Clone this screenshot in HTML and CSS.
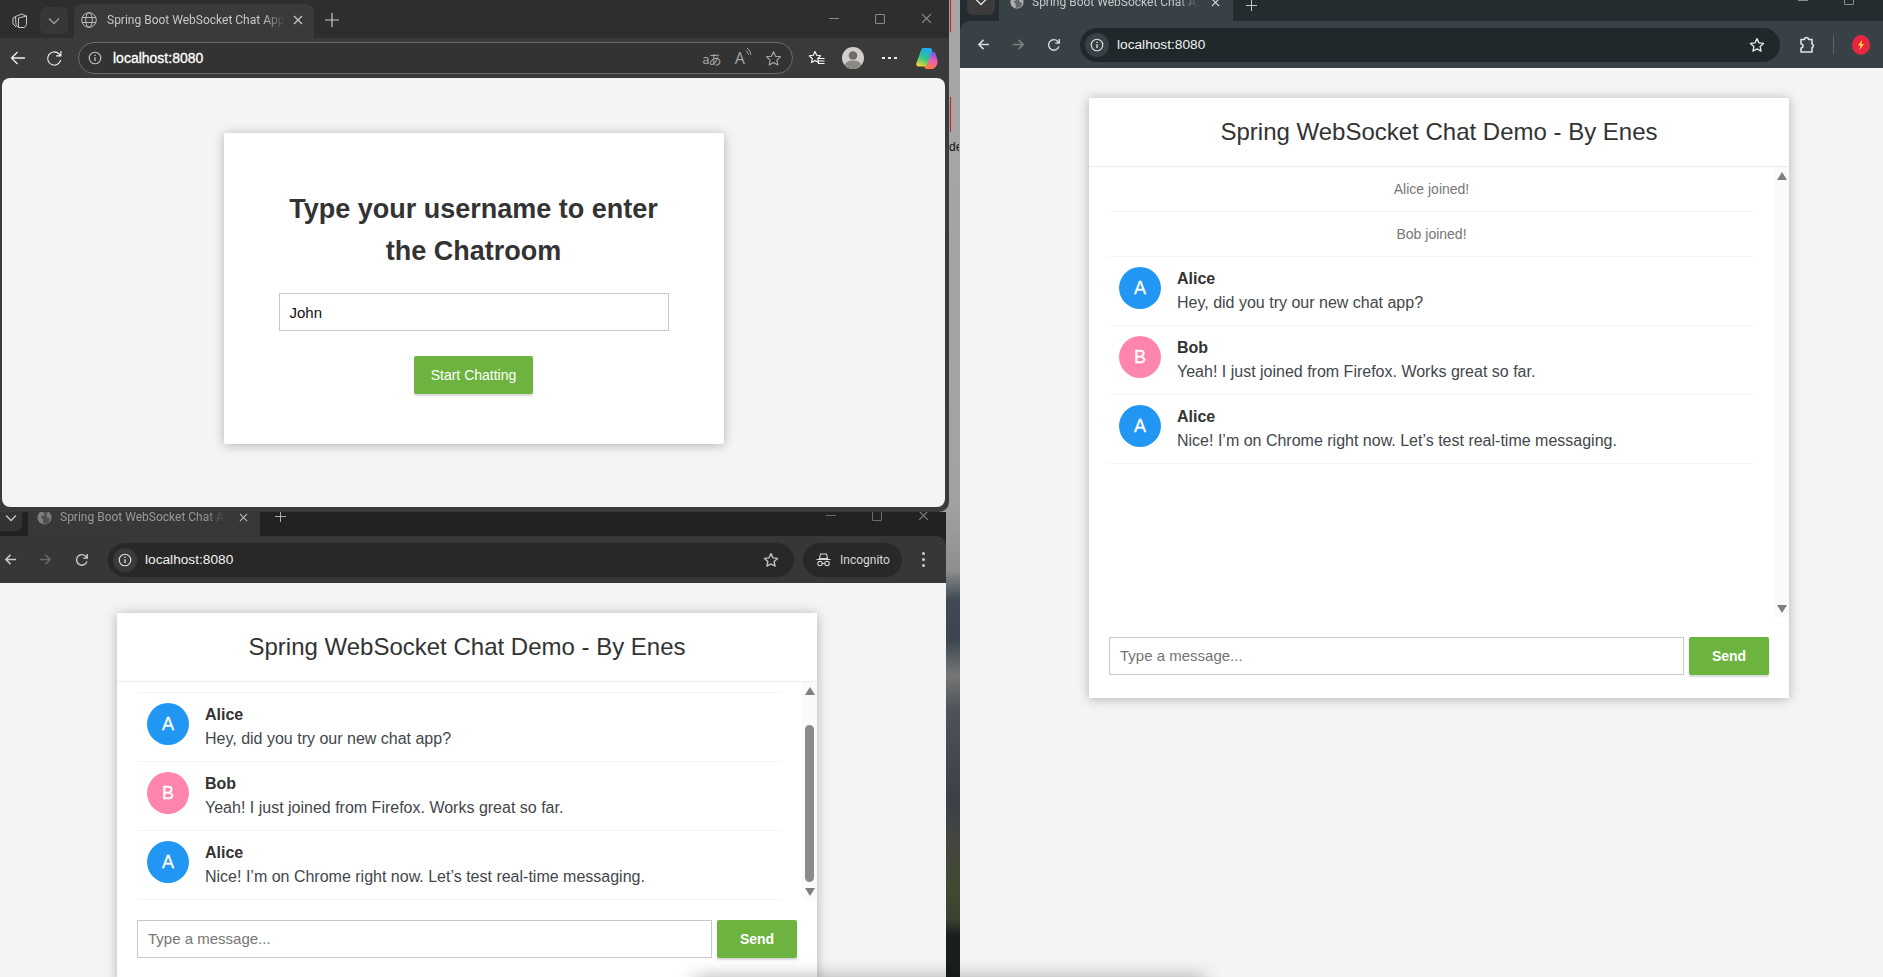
FILE: index.html
```html
<!doctype html>
<html lang="en">
<head>
  <title>Spring Boot WebSocket Chat App</title>
  <meta charset="utf-8">
  <link rel="stylesheet" href="styles.css">
</head>
<body>

  <!-- shared icons -->
  <svg class="defs" width="0" height="0">
    <symbol id="i-back" viewBox="0 0 16 16"><path d="M15 8H1.5M7.5 2L1.5 8l6 6" fill="none" stroke="currentColor" stroke-width="1.3"/></symbol>
    <symbol id="i-back-bold" viewBox="0 0 14 14"><path d="M13 7H2M7 2L2 7l5 5" fill="none" stroke="currentColor" stroke-width="1.7"/></symbol>
    <symbol id="i-forward" viewBox="0 0 14 14"><path d="M1 7h11M7 2l5 5-5 5" fill="none" stroke="currentColor" stroke-width="1.7"/></symbol>
    <symbol id="i-reload" viewBox="0 0 16 16"><path d="M13.6 9.5A6 6 0 1 1 12 3.6L14 5.6M14 1v4.8H9.4" fill="none" stroke="currentColor" stroke-width="1.6"/></symbol>
    <symbol id="i-info" viewBox="0 0 16 16"><circle cx="8" cy="8" r="6.6" fill="none" stroke="currentColor" stroke-width="1.3"/><path d="M8 7v4.4M8 4.4v1.4" stroke="currentColor" stroke-width="1.5"/></symbol>
    <symbol id="i-star" viewBox="0 0 18 18"><path d="M9 1.8l2.2 4.8 5.2.6-3.9 3.5 1.1 5.2L9 13.3l-4.6 2.6 1.1-5.2L1.6 7.2l5.2-.6z" fill="none" stroke="currentColor" stroke-width="1.5" stroke-linejoin="round"/></symbol>
    <symbol id="i-globe-solid" viewBox="0 0 16 16"><circle cx="8" cy="8" r="7.5" fill="currentColor"/><path d="M5 1.5l3 2.5-1 2-3 1 2 2.5 1 4.5-2 1 7-1 2-5-3-1-1-3 2-2-4-1z" fill="#2a2a2a" opacity=".55"/></symbol>
    <symbol id="i-close" viewBox="0 0 10 10"><path d="M1 1l8 8M9 1L1 9" fill="none" stroke="currentColor" stroke-width="1.2"/></symbol>
    <symbol id="i-plus" viewBox="0 0 14 14"><path d="M7 0v14M0 7h14" fill="none" stroke="currentColor" stroke-width="1.2"/></symbol>
    <symbol id="i-chevron" viewBox="0 0 12 8"><path d="M1 1.5l5 5 5-5" fill="none" stroke="currentColor" stroke-width="1.3"/></symbol>
  </svg>

  <div class="desktop">
    <div class="red-edge top"></div>
    <div class="red-edge middle"></div>
    <div class="peek-text">de</div>

    <!-- edge window, login page -->
    <div class="window edge-window">
      <div class="tabstrip">
        <svg class="tab-actions" width="16" height="16" viewBox="0 0 16 16" fill="none" stroke="#c8c8c8" stroke-width="1"><path d="M3.5 3.5l6-2.5 5 2v8.5l-2 3H6.5L4 12z"/><path d="M1 5l2.5-1.5M1 5v6l3 3M6.5 5l8-2M6.5 5v9.500"/></svg>
        <div class="tab-list-btn"><svg width="12" height="8"><use href="#i-chevron"/></svg></div>
        <div class="tab">
          <svg class="tab-globe" width="16" height="16" viewBox="0 0 16 16" fill="none" stroke="#b9b9b9" stroke-width="1"><circle cx="8" cy="8" r="7.300"/><ellipse cx="8" cy="8" rx="3.300" ry="7.300"/><path d="M1 5.500h14M1 10.500h14"/></svg>
          <span class="tab-title">Spring Boot WebSocket Chat App</span>
          <svg class="tab-close" width="10" height="10"><use href="#i-close"/></svg>
        </div>
        <svg class="tab-new" width="14" height="14"><use href="#i-plus"/></svg>
        <div class="win-controls">
          <span class="win-min"></span><span class="win-max"></span>
          <svg width="11" height="11"><use href="#i-close"/></svg>
        </div>
      </div>
      <div class="toolbar">
        <svg class="tool-back" width="16" height="16"><use href="#i-back"/></svg>
        <svg class="tool-reload" width="17" height="17" viewBox="0 0 16 16"><path d="M13.800 9.500A6.200 6.200 0 1 1 12 3.500L14 5.500M14 1v4.500H9.500" fill="none" stroke="currentColor" stroke-width="1.100"/></svg>
        <div class="omnibox">
          <svg class="omni-info" width="14" height="14"><use href="#i-info"/></svg>
          <span class="omni-url">localhost:8080</span>
          <span class="read-translate">aあ</span>
          <span class="read-aloud">A<svg width="7" height="10" viewBox="0 0 7 10" fill="none" stroke="#a8a8a8"><path d="M1 3.500q2 1.500 2.300 4M2 1q3.500 2 4 7"/></svg></span>
          <svg class="omni-star" width="17" height="17" viewBox="0 0 18 18"><path d="M9 1.800l2.200 4.800 5.200.6-3.900 3.500 1.100 5.200L9 13.300l-4.600 2.600 1.100-5.200L1.600 7.200l5.200-.6z" fill="none" stroke="#b0b0b0" stroke-width="1.100" stroke-linejoin="round"/></svg>
        </div>
        <svg class="fav-btn" width="17" height="17" viewBox="0 0 17 17" fill="none" stroke="#fff" stroke-width="1.100"><path d="M7 1.500l1.700 3.800 4 .5-3 2.700.8 4L7 10.500 3.500 12.500l.8-4-3-2.700 4-.5z" stroke-linejoin="round"/><path d="M10 8.500h6.500M10 11h6.500M10 13.500h6.500"/></svg>
        <div class="profile"><svg width="22" height="22" viewBox="0 0 22 22"><circle cx="11" cy="8.500" r="4.300" fill="#6f6c69"/><path d="M2.500 19c1-4.500 4.500-5.500 8.500-5.500s7.500 1 8.500 5.500a11 11 0 0 1-17 0z" fill="#8c8985"/></svg></div>
        <div class="more-dots"><i></i><i></i><i></i></div>
        <svg class="copilot" width="22" height="22" viewBox="0 0 22 22">
          <defs>
            <linearGradient id="cop-a" x1="0.6" y1="0" x2="0.2" y2="1"><stop offset="0" stop-color="#1fa8f5"/><stop offset=".5" stop-color="#2fc38a"/><stop offset="1" stop-color="#f4d92f"/></linearGradient>
            <linearGradient id="cop-b" x1="0.6" y1="0" x2="0.4" y2="1"><stop offset="0" stop-color="#6a55e8"/><stop offset=".5" stop-color="#ee5cb4"/><stop offset="1" stop-color="#f5813a"/></linearGradient>
          </defs>
          <path d="M16 4.500c2.200 0 3.400 1 4 3l1.500 6.500c.6 2.600-1 5-2.800 6.800-.8.800-1.800 1.200-3 1.200H11c-2 0-3-1.400-2.400-3.300l3.800-11.400C13 5.700 14.300 4.500 16 4.500z" fill="url(#cop-b)"/>
          <path d="M7.500 1h6c2.200 0 3.100 1.300 2.500 3.100L11.800 16.500c-.7 2-2.100 3-4 3H3c-2.300 0-3.200-1.600-2.500-3.600L5 3.300C5.400 1.900 6.200 1 7.500 1z" fill="url(#cop-a)"/>
        </svg>
      </div>
      <div class="page login-page">
        <div class="login-card">
          <h1 class="login-title">Type your username to enter the Chatroom</h1>
          <div class="login-input">John</div>
          <div class="btn start-btn">Start Chatting</div>
        </div>
      </div>
    </div>

    <!-- incognito window, scrolled chat -->
    <div class="window incognito-window">
      <div class="tabstrip">
        <div class="tab-list-btn"><svg width="12" height="8"><use href="#i-chevron"/></svg></div>
        <div class="tab">
          <svg class="tab-globe" width="15" height="15"><use href="#i-globe-solid"/></svg>
          <span class="tab-title">Spring Boot WebSocket Chat App</span>
          <svg class="tab-close" width="9" height="9"><use href="#i-close"/></svg>
        </div>
        <svg class="tab-new" width="11" height="11"><use href="#i-plus"/></svg>
        <div class="win-controls">
          <span class="win-min"></span><span class="win-max"></span>
          <svg width="11" height="11"><use href="#i-close"/></svg>
        </div>
      </div>
      <div class="toolbar">
        <svg class="tool-back" width="13" height="13"><use href="#i-back-bold"/></svg>
        <svg class="tool-forward" width="13" height="13"><use href="#i-forward"/></svg>
        <svg class="tool-reload" width="14" height="14"><use href="#i-reload"/></svg>
        <div class="omnibox">
          <span class="omni-chip"><svg width="14" height="14"><use href="#i-info"/></svg></span>
          <span class="omni-url">localhost:8080</span>
          <svg class="omni-star" width="16" height="16"><use href="#i-star"/></svg>
        </div>
        <div class="incognito-pill">
          <svg width="15" height="14" viewBox="0 0 15 14" fill="none" stroke="#d6d6d6" stroke-width="1.100"><path d="M4.500 1h6l1 4.500h-8zM.5 6.500h14"/><circle cx="4" cy="10.500" r="2.200"/><circle cx="11" cy="10.500" r="2.200"/><path d="M6.200 10.500h2.600"/></svg>
          <span>Incognito</span>
        </div>
        <div class="kebab"><i></i><i></i><i></i></div>
      </div>
      <div class="page">
        <div class="chat-card">
          <div class="chat-header"><h2>Spring WebSocket Chat Demo - By Enes</h2></div>
          <div class="chat-body">
            <ul class="message-list">
              <li class="scrolled-off"></li>
              <li class="chat-message">
                <i class="avatar blue">A</i>
                <span class="sender">Alice</span>
                <p>Hey, did you try our new chat app?</p>
              </li>
              <li class="chat-message">
                <i class="avatar pink">B</i>
                <span class="sender">Bob</span>
                <p>Yeah! I just joined from Firefox. Works great so far.</p>
              </li>
              <li class="chat-message">
                <i class="avatar blue">A</i>
                <span class="sender">Alice</span>
                <p>Nice! I’m on Chrome right now. Let’s test real-time messaging.</p>
              </li>
            </ul>
            <div class="scrollbar">
              <span class="arrow-up"></span>
              <span class="thumb"></span>
              <span class="arrow-down"></span>
            </div>
          </div>
          <div class="message-form">
            <div class="message-input">Type a message...</div>
            <div class="btn send-btn">Send</div>
          </div>
        </div>
      </div>
    </div>

    <!-- chrome window, full chat -->
    <div class="window chrome-window">
      <div class="tabstrip">
        <div class="tab-list-btn"><svg width="12" height="8"><use href="#i-chevron"/></svg></div>
        <div class="tab">
          <svg class="tab-globe" width="14" height="14"><use href="#i-globe-solid"/></svg>
          <span class="tab-title">Spring Boot WebSocket Chat App</span>
          <svg class="tab-close" width="9" height="9"><use href="#i-close"/></svg>
        </div>
        <svg class="tab-new" width="11" height="11"><use href="#i-plus"/></svg>
        <div class="win-controls">
          <span class="win-min"></span><span class="win-max"></span>
        </div>
      </div>
      <div class="toolbar">
        <svg class="tool-back" width="13" height="13"><use href="#i-back-bold"/></svg>
        <svg class="tool-forward" width="13" height="13"><use href="#i-forward"/></svg>
        <svg class="tool-reload" width="14" height="14"><use href="#i-reload"/></svg>
        <div class="omnibox">
          <span class="omni-chip"><svg width="14" height="14"><use href="#i-info"/></svg></span>
          <span class="omni-url">localhost:8080</span>
          <svg class="omni-star" width="16" height="16"><use href="#i-star"/></svg>
        </div>
        <svg class="ext-btn" width="16" height="18" viewBox="0 0 16 18" fill="none" stroke="#dfe3e4" stroke-width="1.600"><path d="M2 3.500h3.500a2 2 0 0 1 4 0H13v4.500a1.800 1.800 0 0 1 0 3.500V16H2v-4a2 2 0 0 0 0-4z" stroke-linejoin="round"/></svg>
        <span class="tool-divider"></span>
        <div class="profile-badge"><svg width="8" height="10" viewBox="0 0 8 10"><path d="M5 0L1 5.500h2.500L2.500 10 7 4H4.500z" fill="#ffd93b"/></svg></div>
      </div>
      <div class="page">
        <div class="chat-card">
          <div class="chat-header"><h2>Spring WebSocket Chat Demo - By Enes</h2></div>
          <div class="chat-body">
            <ul class="message-list">
              <li class="event-message"><p>Alice joined!</p></li>
              <li class="event-message"><p>Bob joined!</p></li>
              <li class="chat-message">
                <i class="avatar blue">A</i>
                <span class="sender">Alice</span>
                <p>Hey, did you try our new chat app?</p>
              </li>
              <li class="chat-message">
                <i class="avatar pink">B</i>
                <span class="sender">Bob</span>
                <p>Yeah! I just joined from Firefox. Works great so far.</p>
              </li>
              <li class="chat-message">
                <i class="avatar blue">A</i>
                <span class="sender">Alice</span>
                <p>Nice! I’m on Chrome right now. Let’s test real-time messaging.</p>
              </li>
            </ul>
            <div class="scrollbar">
              <span class="arrow-up"></span>
              <span class="arrow-down"></span>
            </div>
          </div>
          <div class="message-form">
            <div class="message-input">Type a message...</div>
            <div class="btn send-btn">Send</div>
          </div>
        </div>
      </div>
    </div>

    <div class="bottom-shadow"></div>
  </div>

</body>
</html>
```

FILE: styles.css
```css
* {
  box-sizing: border-box;
}
body {
  margin: 0;
  background-color: #1a1e1e;
  font: 16px 'Liberation Sans', Arial, sans-serif;
  color: #333;
  overflow: hidden;
}
.defs {
  position: absolute;
}
.desktop {
  position: relative;
  width: 1883px;
  height: 977px;
  overflow: hidden;
  background: linear-gradient(180deg, #a6a6a6 0, #a2a2a2 500px, #8f8f8f 570px, #3f4a54 600px, #3b4650 640px, #767676 675px, #4c545a 710px, #394147 800px, #45463f 850px, #404a30 890px, #3a4030 920px, #1a1e1e 935px);
}
.red-edge {
  position: absolute;
  left: 950px;
  width: 1px;
  background-color: #d01818;
}
.red-edge.top {
  top: 0;
  height: 32px;
}
.red-edge.middle {
  top: 97px;
  height: 35px;
}
.peek-text {
  position: absolute;
  left: 949px;
  top: 140px;
  width: 10px;
  overflow: hidden;
  font-size: 12px;
  color: #111;
}

/* windows on the desktop */
.window {
  position: absolute;
  display: flex;
  flex-direction: column;
  overflow: hidden;
}
.edge-window {
  left: 0;
  top: 0;
  width: 949px;
  height: 512px;
  background-color: #3a3a3a;
  border-radius: 0 0 10px 0;
  z-index: 2;
}
.incognito-window {
  left: 0;
  top: 512px;
  width: 946px;
  height: 465px;
  background-color: #222;
}
.chrome-window {
  left: 960px;
  top: 0;
  width: 923px;
  height: 977px;
  background-color: #252c2f;
}
.bottom-shadow {
  position: absolute;
  left: 695px;
  top: 977px;
  width: 510px;
  height: 30px;
  background-color: rgba(0, 0, 0, .3);
  filter: blur(9px);
}

/* tab strip */
.tabstrip {
  display: flex;
  align-items: flex-end;
  flex-shrink: 0;
  position: relative;
  overflow: hidden;
}
.tab {
  display: flex;
  align-items: center;
  height: 34px;
  flex-shrink: 0;
  border-radius: 8px 8px 0 0;
  font: 12px Roboto, sans-serif;
}
.tab-title {
  overflow: hidden;
  white-space: nowrap;
  -webkit-mask-image: linear-gradient(90deg, #000 88%, transparent);
  mask-image: linear-gradient(90deg, #000 88%, transparent);
}
.tab-list-btn {
  display: flex;
  align-items: center;
  justify-content: center;
  flex-shrink: 0;
  width: 28px;
  height: 27px;
  border-radius: 6px;
  color: #b4b4b4;
}
.win-controls {
  display: flex;
  align-items: center;
  gap: 36px;
  position: absolute;
  color: #8c8c8c;
}
.win-min {
  width: 10px;
  height: 1px;
  background-color: #8c8c8c;
}
.win-max {
  width: 10px;
  height: 10px;
  border: 1px solid #8c8c8c;
  border-radius: 1px;
}

.edge-window .tabstrip {
  height: 38px;
  padding-left: 12px;
  background-color: #2e2e2e;
}
.tab-actions {
  margin-bottom: 9px;
}
.edge-window .tab-list-btn {
  margin: 0 6px 4px 12px;
  background-color: #373737;
  color: #a0a0a0;
}
.edge-window .tab {
  width: 240px;
  padding: 0 0 2px 7px;
  background-color: #3a3a3a;
  color: #c6c6c6;
}
.edge-window .tab-title {
  width: 178px;
  margin-left: 10px;
}
.edge-window .tab-close {
  margin-left: 8px;
  color: #c8c8c8;
}
.edge-window .tab-new {
  margin: 0 0 11px 11px;
  color: #c8c8c8;
}
.edge-window .win-controls {
  top: 13px;
  left: 829px;
}

.incognito-window .tabstrip {
  height: 24px;
  background-color: #222;
}
.incognito-window .tab-list-btn {
  width: 22px;
  margin: 0 6px 5px 0;
  background-color: #333;
  border-radius: 0 6px 6px 0;
  color: #c8c8c8;
}
.incognito-window .tab {
  width: 232px;
  padding: 0 0 4px 9px;
  background-color: #383838;
  color: #999;
}
.incognito-window .tab-title {
  width: 165px;
  margin-left: 8px;
}
.incognito-window .tab-globe {
  color: #7d7d7d;
}
.incognito-window .tab-close {
  margin-left: 14px;
  color: #bbb;
}
.incognito-window .tab-new {
  margin: 0 0 14px 15px;
  color: #b5b5b5;
}
.incognito-window .win-controls {
  top: -2px;
  left: 826px;
  color: #777;
}
.incognito-window .win-min, .incognito-window .win-max {
  opacity: .7;
}

.chrome-window .tabstrip {
  height: 21px;
  background-color: #252c2f;
}
.chrome-window .tab-list-btn {
  margin: 0 4px 6px 7px;
  background-color: #3b3b3b;
  color: #e6e6e6;
}
.chrome-window .tab {
  width: 234px;
  padding: 0 0 4px 11px;
  background-color: #384246;
  color: #c4cacb;
}
.chrome-window .tab-title {
  width: 166px;
  margin-left: 8px;
}
.chrome-window .tab-globe {
  color: #aab0b2;
}
.chrome-window .tab-close {
  margin-left: 13px;
  color: #e0e0e0;
}
.chrome-window .tab-new {
  margin: 0 0 10px 13px;
  color: #c8d0d2;
}
.chrome-window .win-controls {
  top: -5px;
  left: 838px;
}

/* toolbar */
.toolbar {
  display: flex;
  align-items: center;
  flex-shrink: 0;
}
.omnibox {
  display: flex;
  align-items: center;
  flex-shrink: 0;
}
.omni-url {
  flex-shrink: 0;
  font: 13.7px 'Liberation Sans', Arial, sans-serif;
  color: #f1f1f1;
}
.omni-chip {
  display: flex;
  align-items: center;
  justify-content: center;
  width: 24px;
  height: 24px;
  border-radius: 50%;
}

.edge-window .toolbar {
  height: 40px;
  color: #f0f0f0;
}
.edge-window .tool-back {
  margin-left: 10px;
}
.edge-window .tool-reload {
  margin-left: 20px;
}
.edge-window .omnibox {
  width: 715px;
  height: 32px;
  margin-left: 15px;
  padding-left: 9px;
  border: 1px solid #6c6c6c;
  border-radius: 16px;
  background-color: #333;
}
.edge-window .omni-info {
  color: #c4c4c4;
}
.edge-window .omni-url {
  margin-left: 11px;
  font-size: 14px;
  -webkit-text-stroke: .3px #fff;
  color: #fff;
}
.read-translate {
  flex-shrink: 0;
  margin-left: 499px;
  white-space: nowrap;
  font: 13px 'Noto Sans CJK JP', sans-serif;
  color: #a8a8a8;
  letter-spacing: -1px;
}
.read-aloud {
  display: flex;
  align-items: flex-start;
  flex-shrink: 0;
  margin-left: 14px;
  font: 16px 'Open Sans', sans-serif;
  color: #a8a8a8;
}
.edge-window .omni-star {
  margin-left: 13px;
}
.fav-btn {
  margin-left: 15px;
}
.profile {
  width: 22px;
  height: 22px;
  margin-left: 17px;
  border-radius: 50%;
  background-color: #d2d0cd;
  overflow: hidden;
}
.profile svg {
  display: block;
}
.more-dots {
  display: flex;
  gap: 3px;
  margin-left: 18px;
}
.more-dots i {
  width: 3px;
  height: 2px;
  background-color: #eee;
}
.copilot {
  margin-left: 19px;
}

.incognito-window .toolbar {
  height: 47px;
  background-color: #373737;
  border-radius: 0 10px 0 0;
  color: #c9c9c9;
}
.incognito-window .tool-back {
  margin-left: 4px;
}
.incognito-window .tool-forward {
  margin-left: 22px;
  color: #676767;
}
.incognito-window .tool-reload {
  margin-left: 23px;
}
.incognito-window .omnibox {
  width: 686px;
  height: 34px;
  margin-left: 19px;
  padding-left: 5px;
  border-radius: 17px;
  background-color: #282828;
}
.incognito-window .omni-chip {
  background-color: #3a3a3a;
  color: #e2e2e2;
}
.incognito-window .omni-url {
  margin-left: 8px;
}
.incognito-window .omni-star {
  margin-left: 530px;
  color: #c2c2c2;
}
.incognito-pill {
  display: flex;
  align-items: center;
  width: 99px;
  height: 34px;
  margin-left: 9px;
  padding-left: 13px;
  border-radius: 17px;
  background-color: #282828;
  font: 12px Roboto, sans-serif;
  color: #d9d9d9;
}
.incognito-pill span {
  margin-left: 9px;
}
.kebab {
  display: flex;
  flex-direction: column;
  gap: 3px;
  margin-left: 20px;
}
.kebab i {
  width: 3px;
  height: 3px;
  border-radius: 50%;
  background-color: #cfcfcf;
}

.chrome-window .toolbar {
  height: 47px;
  background-color: #384246;
  border-radius: 10px 0 0 0;
  color: #d4d9da;
}
.chrome-window .tool-back {
  margin-left: 17px;
}
.chrome-window .tool-forward {
  margin-left: 22px;
  color: #79827f;
}
.chrome-window .tool-reload {
  margin-left: 22px;
}
.chrome-window .omnibox {
  width: 700px;
  height: 34px;
  margin-left: 19px;
  padding-left: 5px;
  border-radius: 17px;
  background-color: #1f282b;
}
.chrome-window .omni-chip {
  background-color: #384246;
  color: #e2e2e2;
}
.chrome-window .omni-url {
  margin-left: 8px;
}
.chrome-window .omni-star {
  margin-left: 544px;
  color: #e6e6e6;
}
.ext-btn {
  margin-left: 19px;
}
.tool-divider {
  width: 1px;
  height: 19px;
  margin-left: 18px;
  background-color: #59646a;
}
.profile-badge {
  display: flex;
  align-items: center;
  justify-content: center;
  width: 18px;
  height: 20px;
  margin-left: 18px;
  border-radius: 50%;
  background-color: #e8263f;
}

/* page area */
.page {
  flex: 1;
  min-height: 0;
  background-color: #f4f4f4;
}
.login-page {
  flex: none;
  height: 429px;
  margin: 0 4px 5px 2px;
  padding-top: 55px;
  border-radius: 8px;
  overflow: hidden;
}
.login-card {
  display: flex;
  flex-direction: column;
  align-items: center;
  width: 500px;
  height: 311px;
  margin: 0 auto;
  padding: 55px 55px 0;
  background-color: #fff;
  border-radius: 2px;
  box-shadow: 0 1px 11px rgba(0, 0, 0, .27);
}
.login-title {
  margin: 0;
  font-size: 27px;
  font-weight: bold;
  line-height: 42px;
  text-align: center;
  color: #333;
}
.login-input {
  width: 100%;
  height: 38px;
  margin-top: 21px;
  padding: 0 10px;
  border: 1.5px solid #c8c8c8;
  font-size: 15px;
  line-height: 37px;
  color: #111;
}
.btn {
  display: flex;
  align-items: center;
  justify-content: center;
  height: 38px;
  flex-shrink: 0;
  background-color: #6db33f;
  border-radius: 2px;
  box-shadow: 0 2px 2px 0 rgba(0, 0, 0, .16);
  font-size: 14px;
  color: #fff;
}
.start-btn {
  width: 119px;
  margin-top: 25px;
}

/* chat card */
.chat-card {
  display: flex;
  flex-direction: column;
  width: 700px;
  height: 600px;
  margin-top: 30px;
  background-color: #fff;
  box-shadow: 0 1px 11px rgba(0, 0, 0, .27);
}
.incognito-window .chat-card {
  height: 368px;
  margin-left: 117px;
}
.chrome-window .chat-card {
  margin-left: 129px;
}
.chat-header {
  height: 69px;
  flex-shrink: 0;
  padding-top: 20px;
  border-bottom: 1px solid #ececec;
  text-align: center;
}
.chat-header h2 {
  margin: 0;
  font-size: 24px;
  font-weight: normal;
  line-height: 28px;
  color: #333;
}
.chat-body {
  display: flex;
  flex: 1;
  min-height: 0;
}
.message-list {
  flex: 1;
  margin: 0;
  padding: 0 20px;
  list-style: none;
  overflow: hidden;
}
.message-list li {
  padding: 10px 20px;
  line-height: 24px;
  border-bottom: 1px solid #f4f4f4;
}
.message-list p {
  margin: 0;
  color: #43464b;
}
.message-list .scrolled-off {
  height: 11px;
  padding: 0;
}
.event-message {
  font-size: 14px;
  text-align: center;
}
.message-list .event-message p {
  color: #777;
}
.chat-message {
  position: relative;
}
.message-list .chat-message {
  padding-left: 68px;
}
.sender {
  font-weight: bold;
  color: #333;
}
.avatar {
  position: absolute;
  left: 10px;
  top: 10px;
  width: 42px;
  height: 42px;
  border-radius: 50%;
  font-size: 18px;
  font-style: normal;
  line-height: 42px;
  text-align: center;
  -webkit-text-stroke: .3px #fff;
  color: #fff;
}
.avatar.blue {
  background-color: #2196f3;
}
.avatar.pink {
  background-color: #ff85af;
}
.scrollbar {
  display: flex;
  flex-direction: column;
  align-items: center;
  justify-content: space-between;
  position: relative;
  width: 15px;
  flex-shrink: 0;
  padding: 5px 0 4px;
  background-color: #fafafa;
}
.arrow-up {
  border: 5px solid transparent;
  border-top: 0;
  border-bottom: 8px solid #7f7f7f;
}
.arrow-down {
  border: 5px solid transparent;
  border-bottom: 0;
  border-top: 8px solid #7f7f7f;
}
.thumb {
  width: 9px;
  height: 157px;
  margin-top: 30px;
  margin-bottom: auto;
  border-radius: 5px;
  background-color: #8a8a8a;
}
.message-form {
  display: flex;
  gap: 5px;
  height: 81px;
  flex-shrink: 0;
  padding: 20px;
}
.message-input {
  flex: 1;
  height: 38px;
  padding: 0 10px;
  border: 1.5px solid #c8c8c8;
  font-size: 15px;
  line-height: 36px;
  color: #757575;
}
.send-btn {
  width: 80px;
  font-weight: bold;
}
```
